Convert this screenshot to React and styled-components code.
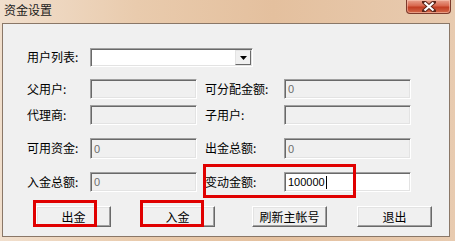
import React from 'react';
import styled, { createGlobalStyle } from 'styled-components';

const Global = createGlobalStyle`
  html, body { margin: 0; padding: 0; background: #e9cdb2; }
  * { box-sizing: border-box; }
`;

const Window = styled.div`
  position: relative;
  width: 455px;
  height: 241px;
  background: linear-gradient(90deg, #f1dfcd 0%, #e9cbad 30%, #e4c09e 60%, #e8cbb0 100%);
  font-family: "Noto Sans CJK SC", "Liberation Sans", sans-serif;
  font-size: 12px;
  color: #000;
  overflow: hidden;
`;

const TitleBar = styled.div`
  height: 23px;
  display: flex;
  align-items: flex-start;
  justify-content: space-between;
  padding-left: 4px;
`;

const Title = styled.div`
  line-height: 20px;
  font-size: 12px;
  color: #1a1a1a;
`;

const Close = styled.div`
  width: 45px;
  height: 14px;
  margin-right: 4px;
  border: 1px solid #7c3a2c;
  border-top: none;
  border-radius: 0 0 4px 4px;
  background: linear-gradient(180deg, #e9a38f 0%, #d8674d 45%, #c23d22 55%, #d36a4c 100%);
  display: flex;
  align-items: center;
  justify-content: center;
  box-shadow: inset 0 0 0 1px rgba(255, 210, 190, 0.5);
`;

const Panel = styled.div`
  margin-left: 2px;
  width: 448px;
  height: 214px;
  border: 1px solid #8a7767;
  background: #f0f0f0;
  padding: 24px 0 0 24px;
`;

const Row = styled.div`
  display: flex;
  align-items: center;
  height: ${p => p.$h || 20}px;
  margin-top: ${p => p.$top || 0}px;
`;

const Label = styled.div`
  width: ${p => p.$w}px;
  margin-left: ${p => p.$left || 0}px;
  margin-top: -2px;
  white-space: nowrap;
`;

const Field = styled.div`
  width: ${p => p.$w}px;
  height: 100%;
  border-top: 1px solid #a0a0a0;
  border-left: 1px solid #a0a0a0;
  border-right: 1px solid #ffffff;
  border-bottom: 1px solid #ffffff;
  box-shadow: inset 1px 1px 0 #696969, inset -1px -1px 0 #e3e3e3;
  background: ${p => (p.$active ? '#ffffff' : '#f0f0f0')};
  color: ${p => (p.$active ? '#000' : '#6d6d6d')};
  font-family: "Liberation Sans", Arial, sans-serif;
  font-size: 11px;
  display: flex;
  align-items: center;
  padding-left: 3px;
`;

const Caret = styled.span`
  display: inline-block;
  width: 1px;
  height: 13px;
  background: #000;
  margin-left: 1px;
`;

const Combo = styled(Field)`
  background: #fff;
  justify-content: flex-end;
  padding: 1px;
`;

const DropBtn = styled.div`
  width: 16px;
  height: 100%;
  background: #f0f0f0;
  border-top: 1px solid #e3e3e3;
  border-left: 1px solid #e3e3e3;
  border-right: 1px solid #696969;
  border-bottom: 1px solid #696969;
  display: flex;
  align-items: center;
  justify-content: center;
`;

const ButtonRow = styled.div`
  display: flex;
  height: 21px;
  margin-top: 14px;
`;

const Button = styled.div`
  width: 75px;
  height: 21px;
  margin-left: ${p => p.$left}px;
  background: #f0f0f0;
  border-top: 1px solid #ffffff;
  border-left: 1px solid #ffffff;
  border-right: 1px solid #696969;
  border-bottom: 1px solid #696969;
  box-shadow: inset -1px -1px 0 #a0a0a0, inset 1px 1px 0 #e3e3e3;
  display: flex;
  align-items: center;
  justify-content: center;
  font-size: 12px;
`;

const Mark = styled.div`
  position: absolute;
  left: ${p => p.$x}px;
  top: ${p => p.$y}px;
  width: ${p => p.$w}px;
  height: ${p => p.$h}px;
  border: 3px solid #e00000;
  pointer-events: none;
`;

export default function App() {
  return (
    <>
      <Global />
      <Window>
        <TitleBar>
          <Title>资金设置</Title>
          <Close>
            <svg width="14" height="11" viewBox="0 0 14 11">
              <path d="M2 1 L12 10 M12 1 L2 10" stroke="#5a2418" strokeWidth="4" strokeLinecap="square" />
              <path d="M2.5 1.5 L11.5 9.5 M11.5 1.5 L2.5 9.5" stroke="#ffffff" strokeWidth="2.2" />
            </svg>
          </Close>
        </TitleBar>
        <Panel>
          <Row $h={19}>
            <Label $w={63}>用户列表:</Label>
            <Combo $w={163}>
              <DropBtn>
                <svg width="7" height="4" viewBox="0 0 7 4">
                  <path d="M0 0 H7 L3.5 4 Z" fill="#000" />
                </svg>
              </DropBtn>
            </Combo>
          </Row>
          <Row $top={12}>
            <Label $w={63}>父用户:</Label>
            <Field $w={107} />
            <Label $w={79} $left={8}>可分配金额:</Label>
            <Field $w={127}>0</Field>
          </Row>
          <Row $top={6}>
            <Label $w={63}>代理商:</Label>
            <Field $w={107} />
            <Label $w={79} $left={8}>子用户:</Label>
            <Field $w={127} />
          </Row>
          <Row $top={13} $h={21}>
            <Label $w={63}>可用资金:</Label>
            <Field $w={107}>0</Field>
            <Label $w={79} $left={8}>出金总额:</Label>
            <Field $w={127}>0</Field>
          </Row>
          <Row $top={13}>
            <Label $w={63}>入金总额:</Label>
            <Field $w={107}>0</Field>
            <Label $w={79} $left={8}>变动金额:</Label>
            <Field $w={127} $active>100000<Caret /></Field>
          </Row>
          <ButtonRow>
            <Button $left={9}>出金</Button>
            <Button $left={29}>入金</Button>
            <Button $left={37}>刷新主帐号</Button>
            <Button $left={30}>退出</Button>
          </ButtonRow>
        </Panel>
        <Mark $x={33} $y={200} $w={64} $h={27} />
        <Mark $x={140} $y={200} $w={64} $h={27} />
        <Mark $x={203} $y={164} $w={153} $h={34} />
      </Window>
    </>
  );
}
